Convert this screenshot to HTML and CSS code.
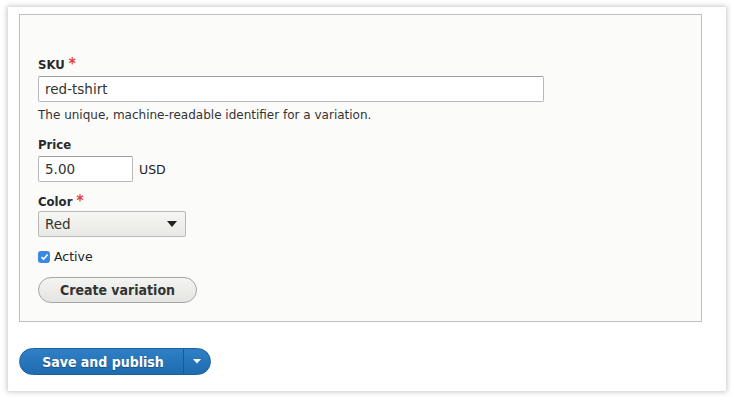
FILE: index.html
```html
<!DOCTYPE html>
<html>
<head>
<meta charset="utf-8">
<link rel="stylesheet" href="styles.css">
</head>
<body>
<div class="frame">
  <div class="panel">
    <div class="fieldset">
      <div class="field">
        <label class="label">SKU <span class="req">*</span></label>
        <input class="text sku" type="text" value="red-tshirt">
        <div class="desc">The unique, machine-readable identifier for a variation.</div>
      </div>
      <div class="field">
        <label class="label">Price</label>
        <div class="row">
          <input class="text price" type="text" value="5.00">
          <span class="suffix">USD</span>
        </div>
      </div>
      <div class="field">
        <label class="label">Color <span class="req">*</span></label>
        <div class="select">
          <span>Red</span>
          <svg width="10" height="6" viewBox="0 0 10 6"><path d="M0 0H10L5 6Z" fill="#222"/></svg>
        </div>
      </div>
      <div class="check">
        <span class="box"><svg width="9" height="8" viewBox="0 0 9 8"><path d="M1.5 4.2L3.6 6.2L7.6 1.6" fill="none" stroke="#fff" stroke-width="1.6"/></svg></span>
        <span>Active</span>
      </div>
      <button class="btn">Create variation</button>
    </div>
    <div class="actions">
      <div class="split">
        <span class="main">Save and publish</span>
        <span class="toggle"><svg width="8" height="5" viewBox="0 0 8 5"><path d="M0 0H8L4 4.5Z" fill="#fff"/></svg></span>
      </div>
    </div>
  </div>
</div>
</body>
</html>
```
FILE: styles.css
```css
html, body {
  margin: 0;
  padding: 0;
  background: #fff;
}
body {
  font-family: "DejaVu Sans", "Lucida Grande", sans-serif;
  color: #222;
}
.frame {
  padding: 7px 8px 9px 8px;
}
.panel {
  background: #fff;
  box-shadow: 0 0 5px 1px rgba(0,0,0,0.22);
  padding: 7px 24px 17px 11px;
  height: 384px;
  box-sizing: border-box;
  width: 718px;
}
.fieldset {
  border: 1px solid #c0c0c0;
  background: #fbfbfa;
  padding: 41px 18px 18px 18px;
  height: 308px;
  box-sizing: border-box;
}
.field {
  padding-bottom: 11px;
}
.label {
  display: block;
  font-family: "DejaVu Sans Condensed", "DejaVu Sans", sans-serif;
  font-stretch: condensed;
  font-weight: bold;
  font-size: 13px;
  line-height: 16px;
  margin-bottom: 3px;
  color: #2a2a2a;
}
.req {
  color: #e2402a;
  font-size: 15px;
}
.text {
  display: block;
  box-sizing: border-box;
  height: 26px;
  border: 1px solid #b8b8b8;
  border-top-color: #9c9c9c;
  border-radius: 2px;
  background: #fff;
  font-family: inherit;
  font-size: 13.5px;
  color: #333;
  padding: 0 6px;
  margin: 0;
}
.sku { width: 506px; }
.desc {
  font-size: 12px;
  color: #333;
  margin-top: 5px;
  padding-bottom: 3px;
  line-height: 16px;
}
.row {
  display: flex;
  align-items: center;
  gap: 6px;
}
.price { width: 95px; }
.suffix {
  font-size: 12.5px;
  color: #222;
}
.select {
  width: 148px;
  height: 26px;
  margin-top: -2px;
  box-sizing: border-box;
  border: 1px solid #b8b8b8;
  border-radius: 2px;
  background: linear-gradient(#f6f6f3, #e8e8e4);
  display: flex;
  align-items: center;
  justify-content: space-between;
  padding: 0 8px 0 6px;
  font-size: 13.5px;
  color: #333;
}
.check {
  display: flex;
  align-items: center;
  gap: 4px;
  font-size: 12.5px;
  margin-top: 1px;
  margin-bottom: 13px;
}
.box {
  width: 12px;
  height: 12px;
  border-radius: 3px;
  background: #3b87e6;
  display: flex;
  align-items: center;
  justify-content: center;
}
.btn {
  display: block;
  height: 26px;
  width: 159px;
  border: 1px solid #a6a6a6;
  border-radius: 13px;
  background: linear-gradient(#f4f4f2, #e4e4e0);
  font-family: "DejaVu Sans Condensed", "DejaVu Sans", sans-serif;
  font-stretch: condensed;
  font-weight: bold;
  font-size: 14px;
  color: #333;
  padding: 0;
}
.actions {
  margin-top: 26px;
}
.split {
  display: flex;
  width: 192px;
  height: 27px;
  border-radius: 14px;
  background: linear-gradient(#2f80c6, #1f6bb0);
  border: 1px solid #1e5f9e;
  box-sizing: border-box;
  color: #fff;
  font-family: "DejaVu Sans Condensed", "DejaVu Sans", sans-serif;
  font-stretch: condensed;
  font-weight: bold;
  font-size: 14px;
}
.main {
  flex: 1;
  display: flex;
  align-items: center;
  justify-content: center;
  padding-left: 3px;
  border-right: 1px solid #175a94;
  text-shadow: 0 1px 1px rgba(0,0,0,0.3);
}
.toggle {
  width: 26px;
  display: flex;
  align-items: center;
  justify-content: center;
}
```
